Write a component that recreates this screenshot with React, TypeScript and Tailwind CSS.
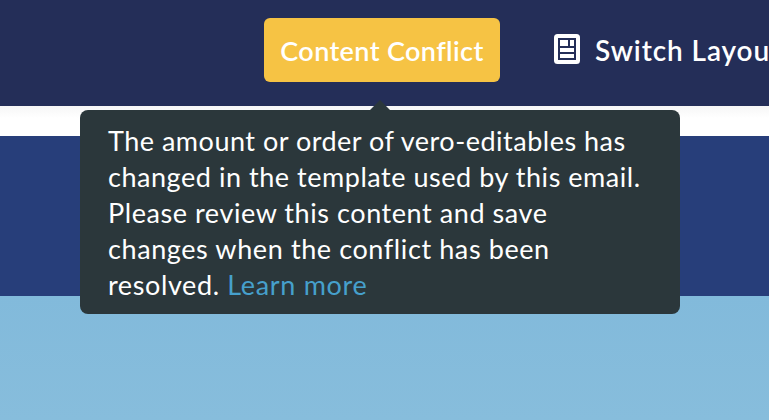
const message = [
  { text: "The amount or order of vero-editables has", spacing: "tracking-[0.5px]" },
  { text: "changed in the template used by this email.", spacing: "tracking-[0.54px]" },
  { text: "Please review this content and save", spacing: "tracking-[0.57px]" },
  { text: "changes when the conflict has been", spacing: "tracking-[0.6px]" },
];

function LayoutIcon() {
  return (
    <svg width="26" height="30" viewBox="0 0 26 30" className="shrink-0">
      <rect width="26" height="30" rx="3.5" fill="#ffffff" />
      <path d="M4 4h18v22H4z" fill="#242e58" />
      <path d="M6 6h8v6H6zM16 6h4v6h-4zM6 14h14v4H6zM6 20h14v4H6z" fill="#ffffff" />
    </svg>
  );
}

function ConflictTooltip() {
  return (
    <div
      role="tooltip"
      className="absolute -left-[184px] top-[92px] w-[600px] h-[204px] rounded-lg bg-[#2b373b] px-7 pt-[13px] text-[27px] leading-9 text-white"
    >
      <svg width="20" height="10" viewBox="0 0 20 10" className="absolute left-[290px] -top-[10px]">
        <path d="M0 10L10 0l10 10z" fill="#2b373b" />
      </svg>
      {message.map((line) => (
        <div key={line.text} className="whitespace-nowrap">
          <span className={line.spacing}>{line.text}</span>
        </div>
      ))}
      <div className="whitespace-nowrap">
        <span className="tracking-[0.6px]">resolved. </span>
        <a href="#" className="text-[#46a0cc] tracking-[0.7px]">Learn more</a>
      </div>
    </div>
  );
}

export default function App() {
  return (
    <div className="w-full h-[420px] overflow-hidden flex flex-col bg-white font-['Lato',sans-serif]">
      <header className="h-[106px] shrink-0 bg-[#242e58] pl-[264px] pt-[18px] flex items-start">
        <div className="relative shrink-0">
          <button className="w-[236px] h-16 rounded-md bg-[#f6c344] text-[27px] font-semibold text-white whitespace-nowrap flex items-center justify-center pt-0.5">
            <span className="tracking-[0.38px]">Content Conflict</span>
          </button>
          <ConflictTooltip />
        </div>
        <button className="ml-[54px] h-[62px] shrink-0 flex items-center text-[28px] font-semibold text-white whitespace-nowrap">
          <LayoutIcon />
          <span className="ml-[15px] pt-0.5 tracking-[0.9px]">Switch Layout</span>
        </button>
      </header>
      <div className="h-[30px] shrink-0 bg-gradient-to-b from-[#f6f6f6] to-white to-40%" />
      <div className="h-40 shrink-0 bg-[#273e7a]" />
      <div className="flex-1 bg-gradient-to-b from-[#82badb] to-[#87bddc]" />
    </div>
  );
}
